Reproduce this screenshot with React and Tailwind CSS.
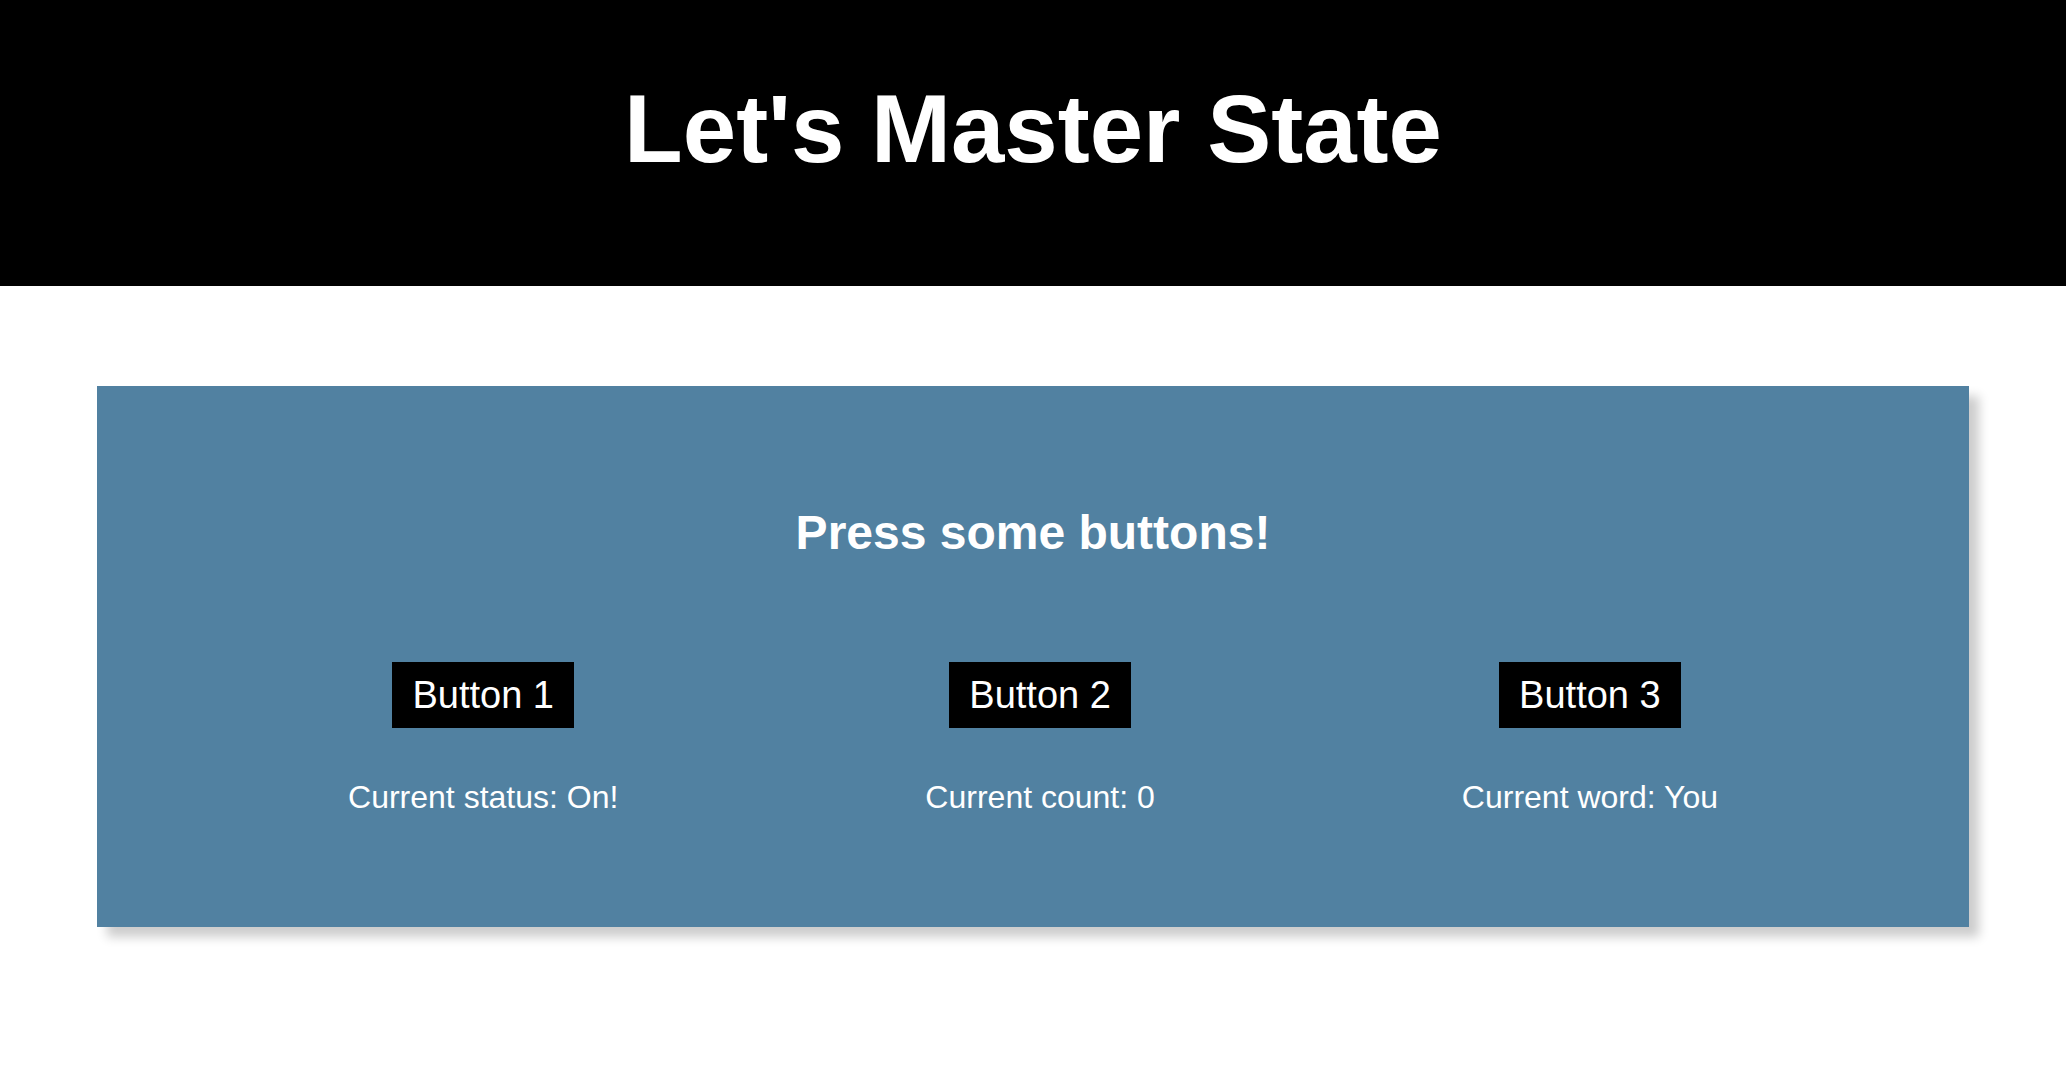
import React, { useState } from 'react';

const words = ['You', 'Are', 'Awesome'];

const Column = ({ label, text, onClick }) => (
  <div className="flex flex-col items-center">
    <button
      type="button"
      onClick={onClick}
      className="h-[66px] px-[20px] bg-black text-white text-[38px] leading-none flex items-center"
    >
      {label}
    </button>
    <p className="mt-[53px] text-[32px] leading-none text-white">{text}</p>
  </div>
);

export default function App() {
  const [on, setOn] = useState(true);
  const [count, setCount] = useState(0);
  const [wordIdx, setWordIdx] = useState(0);

  return (
    <div className="min-h-screen bg-white font-['Liberation_Sans',Arial,sans-serif]">
      <header className="h-[286px] bg-black pt-[81px]">
        <h1 className="text-center text-white text-[96px] font-bold leading-none">
          Let's Master State
        </h1>
      </header>

      <main className="mt-[100px] mx-auto w-[1872px] bg-[#5181a1] pt-[123px] pb-[114px] shadow-[10px_10px_10px_rgba(0,0,0,0.2)]">
        <h2 className="text-center text-white text-[48px] font-bold leading-none">Press some buttons!</h2>
        <div className="mt-[105px] flex justify-center gap-[307px]">
          <Column
            label="Button 1"
            text={`Current status: ${on ? 'On!' : 'Off!'}`}
            onClick={() => setOn((v) => !v)}
          />
          <Column
            label="Button 2"
            text={`Current count: ${count}`}
            onClick={() => setCount((c) => c + 1)}
          />
          <Column
            label="Button 3"
            text={`Current word: ${words[wordIdx]}`}
            onClick={() => setWordIdx((i) => (i + 1) % words.length)}
          />
        </div>
      </main>
    </div>
  );
}
